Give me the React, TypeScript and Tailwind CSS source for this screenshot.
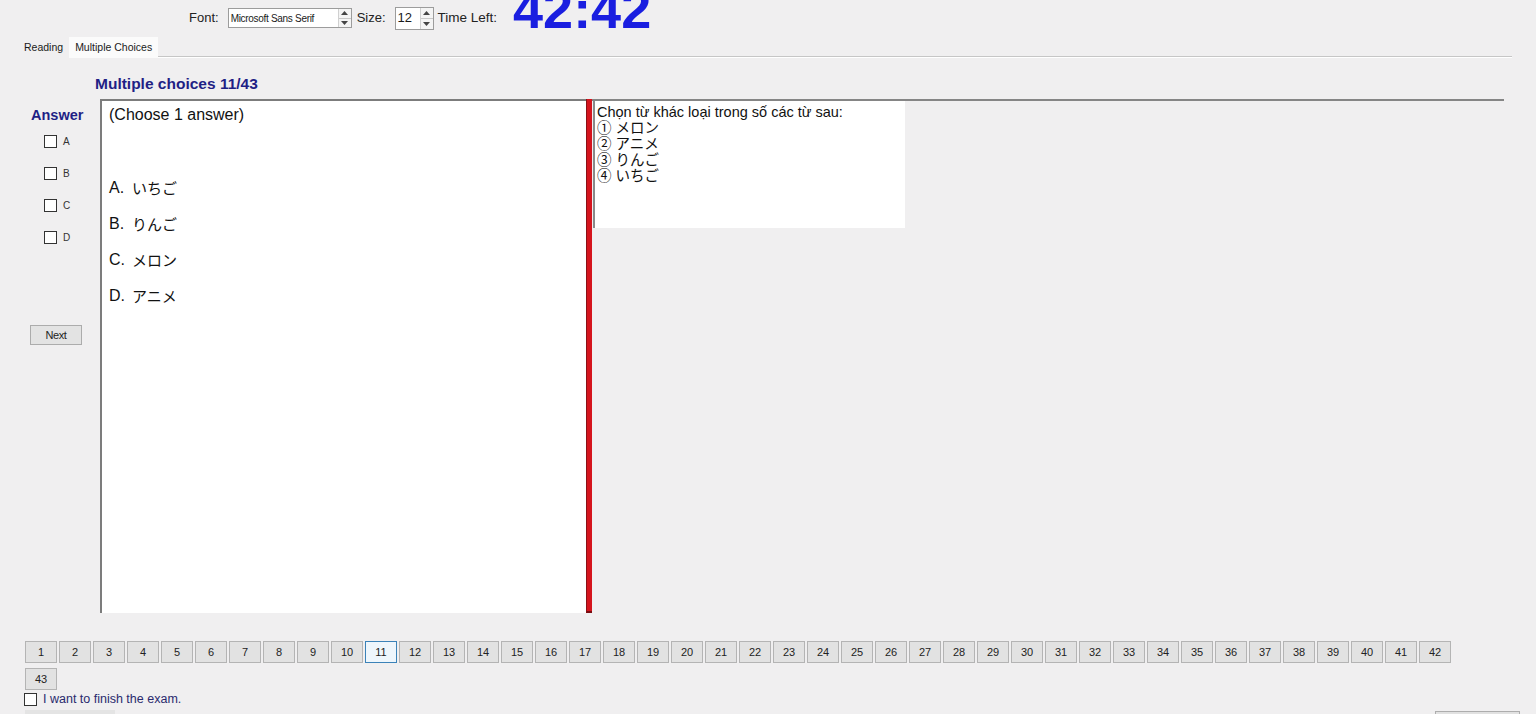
import React from "react";

const font = { fontFamily: '"Liberation Sans", Arial, "Noto Sans CJK JP", sans-serif' };

function Spinner() {
  return (
    <div className="w-[13px] h-full flex flex-col border-l border-[#d0d0d0] bg-[#f4f4f4]">
      <div className="flex-1 flex items-center justify-center border-b border-[#c8c8c8]">
        <svg width="7" height="4" viewBox="0 0 7 4">
          <path d="M0 4 L3.5 0 L7 4 Z" fill="#444" />
        </svg>
      </div>
      <div className="flex-1 flex items-center justify-center">
        <svg width="7" height="4" viewBox="0 0 7 4">
          <path d="M0 0 L3.5 4 L7 0 Z" fill="#444" />
        </svg>
      </div>
    </div>
  );
}

function Box({ className = "" }: { className?: string }) {
  return <div className={"w-[13px] h-[13px] bg-white border border-[#333] shrink-0 " + className} />;
}

export default function App() {
  const nums = Array.from({ length: 43 }, (_, i) => i + 1);
  const options = [
    ["A.", "いちご"],
    ["B.", "りんご"],
    ["C.", "メロン"],
    ["D.", "アニメ"],
  ];

  return (
    <div className="w-[1536px] h-[714px] overflow-hidden bg-[#f0eff0] text-[#1a1a1a]" style={font}>
      {/* Top bar */}
      <div className="h-[36px] flex items-center pl-[189px]">
        <span className="text-[13px] text-[#222]">Font:</span>
        <div className="ml-[9px] w-[124px] h-[20px] bg-white border border-[#9c9c9c] flex">
          <div className="flex-1 flex items-center pl-[2px] text-[10px] tracking-[-0.3px]">Microsoft Sans Serif</div>
          <Spinner />
        </div>
        <span className="ml-[5px] text-[13px] text-[#222]">Size:</span>
        <div className="ml-[9px] w-[39px] h-[23px] bg-white border border-[#9c9c9c] flex">
          <div className="flex-1 flex items-center pl-[2px] text-[13px]">12</div>
          <Spinner />
        </div>
        <span className="ml-[4px] text-[13.5px] text-[#222]">Time Left:</span>
        <span className="ml-[16px] self-start -mt-[18px] h-[54px] text-[54px] leading-none font-bold text-[#1a1ee0]">
          42:42
        </span>
      </div>

      {/* Tabs */}
      <div className="h-[22px] flex items-end pl-[20px] pr-[24px]">
        <div className="h-[21px] px-[4px] flex items-center text-[10.5px]">Reading</div>
        <div className="h-[21px] ml-[2px] px-[6px] flex items-center text-[10.5px] bg-[#fbfbfb]">Multiple Choices</div>
        <div className="flex-1 h-[2px] border-t border-[#c6c6c6] bg-white" />
      </div>

      {/* Heading */}
      <div className="h-[41px] flex items-end pb-[6px] pl-[95px]">
        <span className="text-[15.5px] leading-[18px] font-bold text-[#1f1f85]">Multiple choices 11/43</span>
      </div>

      {/* Main area */}
      <div className="flex h-[514px] pr-[32px]">
        {/* Answer column */}
        <div className="w-[100px] shrink-0 flex flex-col">
          <div className="pl-[31px] pt-[8px] text-[14.5px] leading-[16px] font-bold text-[#1f1f85]">Answer</div>
          <div className="flex flex-col gap-[19px] pl-[44px] mt-[12px]">
            {["A", "B", "C", "D"].map((l) => (
              <div key={l} className="flex items-center h-[13px]">
                <Box />
                <span className="ml-[6px] text-[10px] text-[#333]">{l}</span>
              </div>
            ))}
          </div>
          <button className="ml-[30px] mt-[81px] w-[52px] h-[20px] bg-[#e3e3e3] border border-[#acacac] text-[11px] text-[#222] tracking-[-0.4px]">
            Next
          </button>
        </div>

        {/* Question panel */}
        <div className="w-[486px] shrink-0 bg-white border-l-2 border-t-2 border-[#7c7c7c] pl-[7px] pt-[5px] text-[16px] text-[#111]">
          <div className="leading-[18px]">(Choose 1 answer)</div>
          <div className="flex flex-col gap-[18px] mt-[55px]">
            {options.map(([k, v]) => (
              <div key={k} className="flex items-center h-[18px]">
                <span className="w-[23px]">{k}</span>
                <span className="text-[15px] text-[#111]" style={{ fontFamily: '"Noto Sans CJK JP", sans-serif' }}>
                  {v}
                </span>
              </div>
            ))}
          </div>
        </div>

        {/* Splitter */}
        <div className="w-[6px] shrink-0 bg-[#d5141d] border-l border-[#8a1016] border-b-2 border-b-[#7a0d12]" />

        {/* Right panel */}
        <div className="flex-1 border-t-2 border-[#858585]">
          <div className="w-[312px] h-[127px] bg-white border-l-2 border-[#8a8a8a] ml-[1px] pl-[2px] pt-[3px] text-[14.5px] leading-[16px] text-[#111]">
            <div>Chọn từ khác loại trong số các từ sau:</div>
            <div style={{ fontFamily: '"Liberation Sans", "Noto Sans CJK JP", sans-serif' }}>
              <div>① メロン</div>
              <div>② アニメ</div>
              <div>③ りんご</div>
              <div>④ いちご</div>
            </div>
          </div>
        </div>
      </div>

      {/* Question number buttons */}
      <div className="mt-[28px] pl-[25px]">
        <div className="w-[1430px] flex flex-wrap gap-x-[2px] gap-y-[5px]">
          {nums.map((n) => (
            <button
              key={n}
              className={
                n === 11
                  ? "w-[32px] h-[22px] text-[11px] text-[#222] bg-[#eef6fc] border border-[#3b82b8]"
                  : "w-[32px] h-[22px] text-[11px] text-[#222] bg-[#e2e2e2] border border-[#b4b4b4]"
              }
            >
              {n}
            </button>
          ))}
        </div>
        <div className="mt-[3px] -ml-[1px] flex items-center h-[13px]">
          <Box />
          <span className="ml-[6px] text-[12.5px] text-[#2a2a6e]">I want to finish the exam.</span>
        </div>
      </div>

      {/* Partly visible bottom controls */}
      <div className="mt-[4px] flex justify-between pl-[25px] pr-[16px]">
        <div className="w-[90px] h-[20px] bg-[#e4e4e4]" />
        <div className="mt-[1px] w-[85px] h-[20px] bg-[#e1e1e1] border border-[#adadad]" />
      </div>
    </div>
  );
}
